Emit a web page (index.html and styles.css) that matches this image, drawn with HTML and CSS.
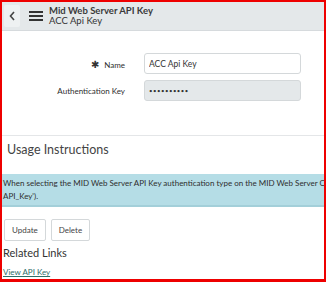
FILE: index.html
```html
<!DOCTYPE html>
<html lang="en">
<head>
    <meta charset="UTF-8">
    <title>Mid Web Server API Key</title>
    <link rel="stylesheet" href="styles.css">
</head>
<body>
    <div class="frame">
        <div class="topbar">
            <button class="back">
                <svg width="6" height="10" viewBox="0 0 6 10"><path d="M5 1 L1.5 5 L5 9" fill="none" stroke="#444" stroke-width="1.6"/></svg>
            </button>
            <span class="menu">
                <svg width="14" height="10" viewBox="0 0 14 10"><rect x="0" y="0" width="14" height="2" fill="#333"/><rect x="0" y="4" width="14" height="2" fill="#333"/><rect x="0" y="8" width="14" height="2" fill="#333"/></svg>
            </span>
            <div class="titles">
                <div class="title">Mid Web Server API Key</div>
                <div class="subtitle">ACC Api Key</div>
            </div>
        </div>

        <div class="form">
            <label class="lbl"><span class="req">✱</span> Name</label>
            <input class="field" type="text" value="ACC Api Key">
            <label class="lbl">Authentication Key</label>
            <input class="field readonly" type="text" value="••••••••••" readonly>
        </div>

        <div class="section">
            <h2>Usage Instructions</h2>
        </div>

        <div class="info">
            <div class="line">When selecting the MID Web Server API Key authentication type on the MID Web Server Co</div>
            <div class="line">API_Key').</div>
        </div>

        <div class="actions">
            <button class="btn">Update</button>
            <button class="btn">Delete</button>
        </div>

        <h3>Related Links</h3>
        <a href="#" class="link">View API Key</a>
    </div>
</body>
</html>
```

FILE: styles.css
```css
body {
    margin: 0;
    font-family: Lato, "Liberation Sans", sans-serif;
    color: #2e2e2e;
    background-color: #ffffff;
}

.frame {
    width: 326px;
    height: 282px;
    box-sizing: border-box;
    border: 2px solid #ee0000;
    border-bottom-width: 3px;
    overflow: hidden;
}

/* barra superior */
.topbar {
    display: flex;
    align-items: center;
    height: 28px;
    background-color: #e4e8ea;
    border-bottom: 1px solid #d6dadd;
}

.back {
    width: 16px;
    height: 22px;
    margin-left: 2px;
    padding: 0;
    border: none;
    border-radius: 2px;
    background-color: #eef1f2;
    display: flex;
    align-items: center;
    justify-content: center;
}

.menu {
    display: flex;
    margin-left: 9px;
    margin-right: 6px;
}

.title {
    font-size: 9.5px;
    font-weight: bold;
    color: #3a3a3a;
    line-height: 10px;
}

.subtitle {
    font-size: 9.5px;
    color: #333;
    line-height: 10px;
}

/* formulario */
.form {
    display: grid;
    grid-template-columns: 123px 157px;
    column-gap: 19px;
    row-gap: 6px;
    align-items: center;
    padding-top: 22px;
    padding-bottom: 34px;
    border-bottom: 1px solid #e4e6e8;
}

.lbl {
    text-align: right;
    font-size: 8px;
    color: #2e2e2e;
}

.req {
    font-size: 10px;
    color: #333;
    margin-right: 3px;
}

.field {
    height: 21px;
    box-sizing: border-box;
    border: 1px solid #d4d8da;
    border-radius: 3px;
    padding: 0 4px;
    font-family: inherit;
    font-size: 8.5px;
    color: #333;
}

.field.readonly {
    background-color: #e4e8ea;
    font-size: 6px;
    letter-spacing: 0.5px;
}

.section {
    padding: 6px 5px 0;
    height: 32px;
}

h2 {
    margin: 0;
    font-size: 12.5px;
    font-weight: normal;
    color: #444;
}

.info {
    background-color: #b5dde6;
    border-bottom: 2px solid #a3cfd9;
    padding: 3px 1px 2px;
    font-size: 8px;
    line-height: 13px;
}

.info .line {
    white-space: nowrap;
}

.actions {
    display: flex;
    gap: 5px;
    padding: 12px 0 0 2px;
}

.btn {
    height: 22px;
    padding: 0 7px;
    background-color: #ffffff;
    border: 1px solid #d4d8da;
    border-radius: 2px;
    font-family: inherit;
    font-size: 8px;
    color: #444;
}

h3 {
    margin: 5px 0 0 1px;
    font-size: 11px;
    font-weight: normal;
    color: #333;
}

.link {
    display: inline-block;
    margin: 6px 0 0 1px;
    font-size: 8px;
    color: #2f6e6a;
    text-decoration: underline;
}
```
